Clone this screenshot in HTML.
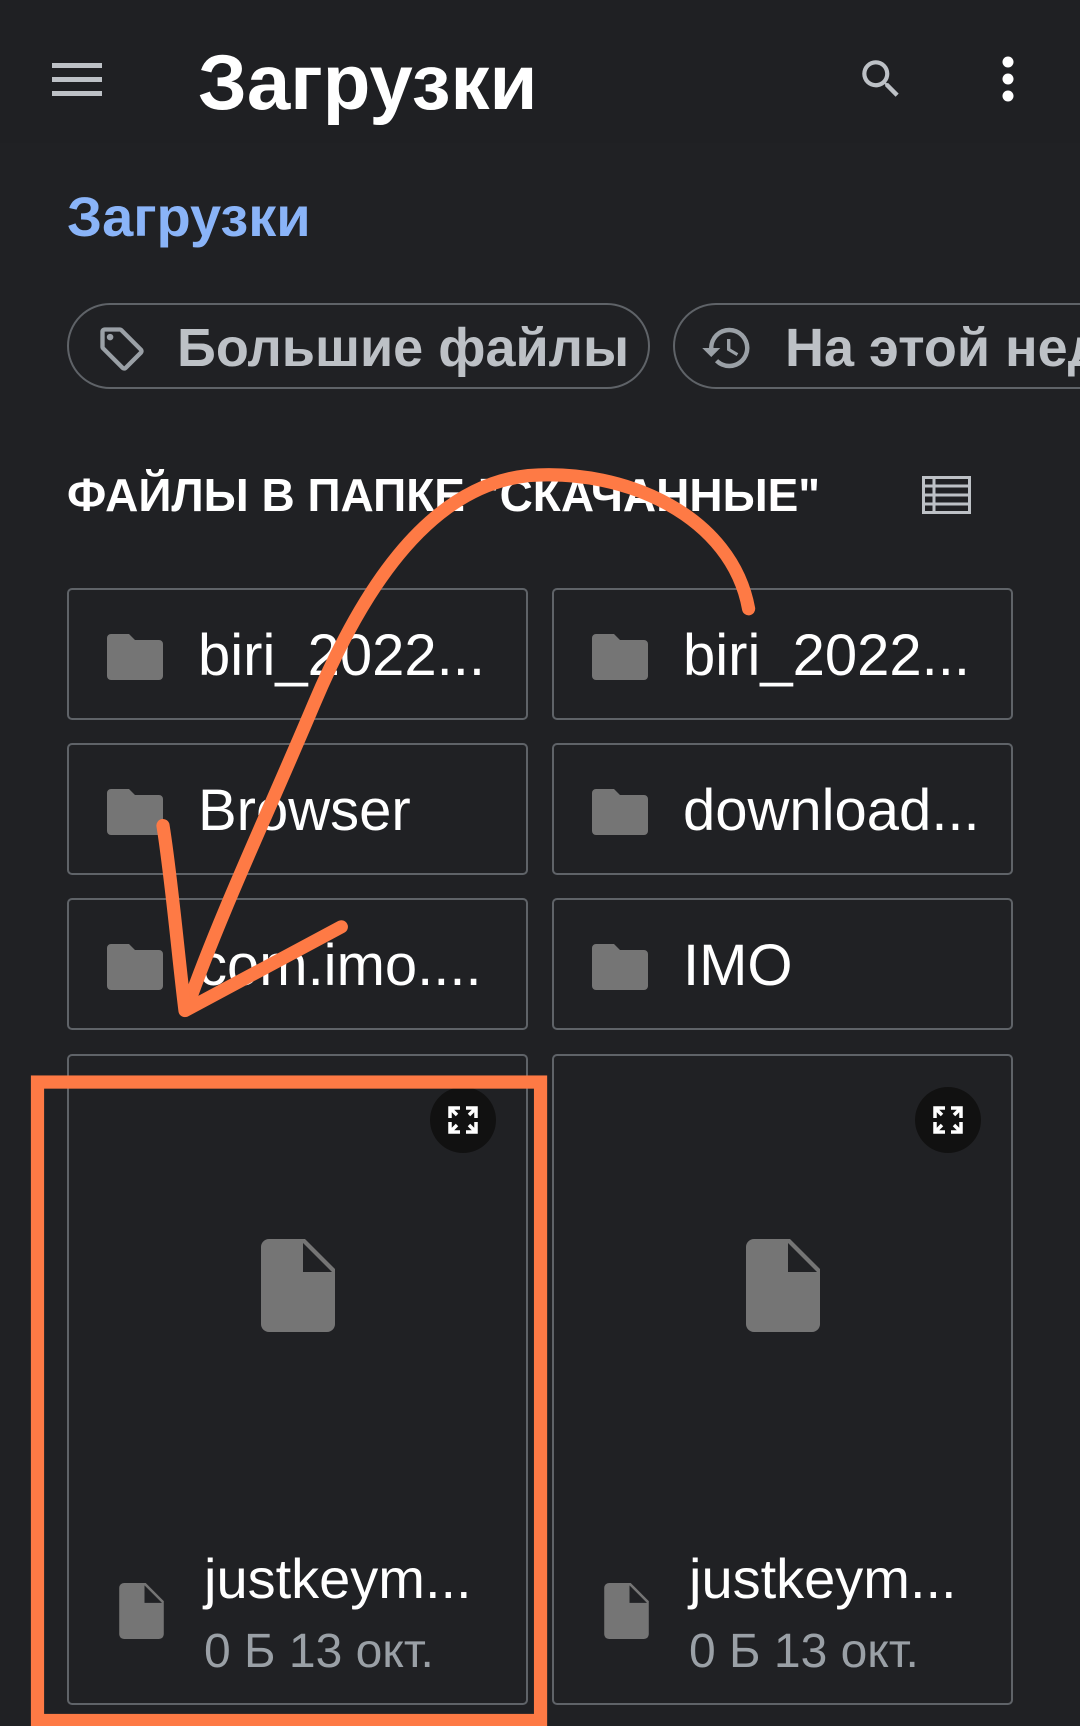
<!DOCTYPE html>
<html><head><meta charset="utf-8"><style>
*{margin:0;padding:0;box-sizing:border-box}
body{width:1080px;height:1726px;background:#202124;position:relative;overflow:hidden;font-family:"Liberation Sans","DejaVu Sans",sans-serif;color:#fff}
.a{position:absolute;white-space:nowrap}
.hdr{position:absolute;left:0;top:0;width:1080px;height:143px;background:#1f2023}
.chip{position:absolute;top:303px;height:86px;border:2px solid #5f6368;border-radius:43px;overflow:hidden}
.chip span{position:absolute;top:12px;font-size:54px;color:#bdc1c6;font-weight:bold;white-space:nowrap}
.card{position:absolute;border:2px solid #5f6368;border-radius:5px;width:461px}
.fold{position:absolute;left:38px;top:44px}
.fn{position:absolute;left:129px;top:32px;font-size:58px;color:#fff;white-space:nowrap}
</style></head><body>
<div class="hdr"></div>
<svg class="a" style="left:52px;top:63px" width="50" height="34"><rect y="0" width="50" height="5" fill="#bdc1c6"/><rect y="14" width="50" height="5" fill="#bdc1c6"/><rect y="28" width="50" height="5" fill="#bdc1c6"/></svg>
<div class="a" style="left:198px;top:37px;font-size:78px;font-weight:bold">Загрузки</div>
<svg class="a" style="left:855px;top:54px" width="52" height="50" viewBox="0 0 24 24"><path d="M15.5 14h-.79l-.28-.27A6.47 6.47 0 0016 9.5 6.5 6.5 0 109.5 16c1.610 0 3.090-.59 4.230-1.57l.27.28v.79l5 4.99L20.49 19l-4.99-5zm-6 0C7.01 14 5 11.99 5 9.5S7.01 5 9.5 5 14 7.01 14 9.5 11.99 14 9.5 14z" fill="#bdc1c6"/></svg>
<svg class="a" style="left:996px;top:56px" width="24" height="46"><circle cx="12" cy="6" r="5.5" fill="#fff"/><circle cx="12" cy="23" r="5.5" fill="#fff"/><circle cx="12" cy="40" r="5.5" fill="#fff"/></svg>
<div class="a" style="left:67px;top:184px;font-size:56px;color:#8ab4f8;font-weight:bold">Загрузки</div>
<div class="chip" style="left:67px;width:583px">
<svg class="a" style="left:25px;top:18px" width="56" height="52" viewBox="0 0 24 24"><path d="M21.41 11.58l-9-9C12.05 2.22 11.55 2 11 2H4c-1.1 0-2 .9-2 2v7c0 .55.22 1.05.59 1.42l9 9c.36.36.86.58 1.41.58s1.05-.22 1.410-.59l7-7c.37-.36.59-.86.59-1.41s-.23-1.06-.59-1.42zM13 20.01L4 11V4h7v-.01l9 9-7 7.02z" fill="#9aa0a6"/><circle cx="6.5" cy="6.5" r="1.5" fill="#9aa0a6"/></svg>
<span style="left:108px">Большие файлы</span></div>
<div class="chip" style="left:673px;width:407px;border-right:none;border-radius:43px 0 0 43px">
<svg class="a" style="left:24px;top:16px" width="56" height="54" viewBox="0 0 24 24"><path d="M13 3a9 9 0 00-9 9H1l3.89 3.89.07.14L9 12H6c0-3.87 3.13-7 7-7s7 3.13 7 7-3.13 7-7 7c-1.93 0-3.68-.79-4.94-2.06l-1.42 1.42A8.95 8.95 0 0013 21a9 9 0 000-18zm-1 5v5l4.28 2.54.72-1.21-3.5-2.08V8H12z" fill="#9aa0a6"/></svg>
<span style="left:110px">На этой неделе</span></div>
<div class="a" style="left:67px;top:468px;font-size:46px;font-weight:bold">ФАЙЛЫ В ПАПКЕ "СКАЧАННЫЕ"</div>
<svg class="a" style="left:922px;top:476px" width="49" height="38" viewBox="0 0 49 38"><rect x="1.5" y="1.5" width="46" height="35" fill="none" stroke="#bdc1c6" stroke-width="3"/><path d="M1 10h47M1 19h47M1 28h47M12 1v36" stroke="#bdc1c6" stroke-width="3"/></svg>

<div class="card" style="left:67px;top:588px;height:132px"><svg class="fold" width="56" height="46" viewBox="0 0 56 46"><path d="M4 0h18l6 6h24a4 4 0 014 4v32a4 4 0 01-4 4H4a4 4 0 01-4-4V4a4 4 0 014-4z" fill="#757575"/></svg><div class="fn">biri_2022...</div></div>
<div class="card" style="left:552px;top:588px;height:132px"><svg class="fold" width="56" height="46" viewBox="0 0 56 46"><path d="M4 0h18l6 6h24a4 4 0 014 4v32a4 4 0 01-4 4H4a4 4 0 01-4-4V4a4 4 0 014-4z" fill="#757575"/></svg><div class="fn">biri_2022...</div></div>
<div class="card" style="left:67px;top:743px;height:132px"><svg class="fold" width="56" height="46" viewBox="0 0 56 46"><path d="M4 0h18l6 6h24a4 4 0 014 4v32a4 4 0 01-4 4H4a4 4 0 01-4-4V4a4 4 0 014-4z" fill="#757575"/></svg><div class="fn">Browser</div></div>
<div class="card" style="left:552px;top:743px;height:132px"><svg class="fold" width="56" height="46" viewBox="0 0 56 46"><path d="M4 0h18l6 6h24a4 4 0 014 4v32a4 4 0 01-4 4H4a4 4 0 01-4-4V4a4 4 0 014-4z" fill="#757575"/></svg><div class="fn">download...</div></div>
<div class="card" style="left:67px;top:898px;height:132px"><svg class="fold" width="56" height="46" viewBox="0 0 56 46"><path d="M4 0h18l6 6h24a4 4 0 014 4v32a4 4 0 01-4 4H4a4 4 0 01-4-4V4a4 4 0 014-4z" fill="#757575"/></svg><div class="fn">com.imo....</div></div>
<div class="card" style="left:552px;top:898px;height:132px"><svg class="fold" width="56" height="46" viewBox="0 0 56 46"><path d="M4 0h18l6 6h24a4 4 0 014 4v32a4 4 0 01-4 4H4a4 4 0 01-4-4V4a4 4 0 014-4z" fill="#757575"/></svg><div class="fn">IMO</div></div>

<div class="card" style="left:67px;top:1054px;height:651px">
<svg class="a" style="left:361px;top:31px" width="66" height="66" viewBox="0 0 66 66"><circle cx="33" cy="33" r="33" fill="#111"/><path d="M20 31v-10h10M20 21l7 7M46 31v-10h-10M46 21l-7 7M20 35v10h10M20 45l7-7M46 35v10h-10M46 45l-7-7" stroke="#fff" stroke-width="3.5" fill="none"/></svg>
<svg class="a" style="left:192px;top:183px" width="74" height="93" viewBox="0 0 74 93"><path d="M8 0h36l30 30v55a8 8 0 01-8 8H8a8 8 0 01-8-8V8a8 8 0 018-8z" fill="#757575"/><path d="M42 4v29h29z" fill="#202124"/></svg>
<svg class="a" style="left:50px;top:527px" width="45" height="56" viewBox="0 0 74 93"><path d="M8 0h36l30 30v55a8 8 0 01-8 8H8a8 8 0 01-8-8V8a8 8 0 018-8z" fill="#757575"/><path d="M42 4v29h29z" fill="#202124"/></svg>
<div class="a" style="left:135px;top:490px;font-size:56px">justkeym...</div>
<div class="a" style="left:135px;top:568px;font-size:48px;color:#9aa0a6">0 Б 13 окт.</div>
</div>
<div class="card" style="left:552px;top:1054px;height:651px">
<svg class="a" style="left:361px;top:31px" width="66" height="66" viewBox="0 0 66 66"><circle cx="33" cy="33" r="33" fill="#111"/><path d="M20 31v-10h10M20 21l7 7M46 31v-10h-10M46 21l-7 7M20 35v10h10M20 45l7-7M46 35v10h-10M46 45l-7-7" stroke="#fff" stroke-width="3.5" fill="none"/></svg>
<svg class="a" style="left:192px;top:183px" width="74" height="93" viewBox="0 0 74 93"><path d="M8 0h36l30 30v55a8 8 0 01-8 8H8a8 8 0 01-8-8V8a8 8 0 018-8z" fill="#757575"/><path d="M42 4v29h29z" fill="#202124"/></svg>
<svg class="a" style="left:50px;top:527px" width="45" height="56" viewBox="0 0 74 93"><path d="M8 0h36l30 30v55a8 8 0 01-8 8H8a8 8 0 01-8-8V8a8 8 0 018-8z" fill="#757575"/><path d="M42 4v29h29z" fill="#202124"/></svg>
<div class="a" style="left:135px;top:490px;font-size:56px">justkeym...</div>
<div class="a" style="left:135px;top:568px;font-size:48px;color:#9aa0a6">0 Б 13 окт.</div>
</div>

<svg class="a" style="left:0;top:0" width="1080" height="1726" viewBox="0 0 981 1568">
<g fill="none" stroke="#fe7a45" stroke-width="12" stroke-linecap="round" stroke-linejoin="round">
<path d="M680,553 C665,470 570,425 480,432 C385,442 325,545 285,640 C245,735 200,830 170,915"/>
<path d="M148,750 C156,800 162,870 168,918 L310,842"/>
<rect x="34" y="983" width="457" height="580" stroke-linecap="butt" stroke-linejoin="miter"/>
</g></svg>
</body></html>
